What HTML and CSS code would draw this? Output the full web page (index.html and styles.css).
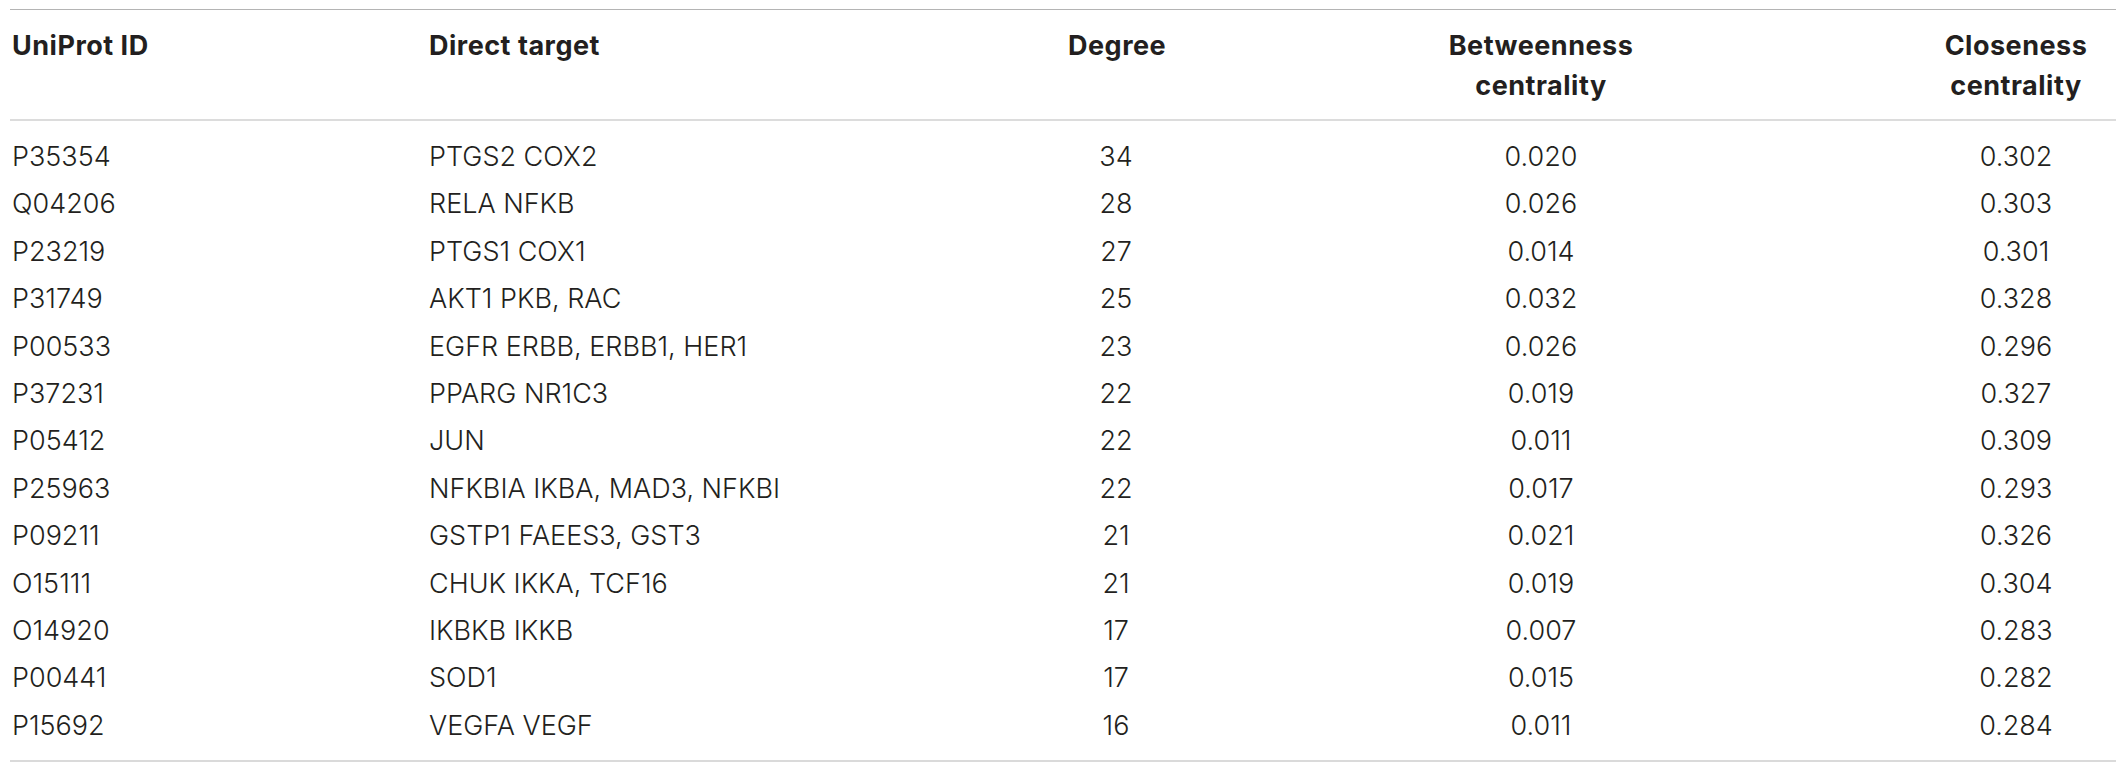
FILE: index.html
```html
<!DOCTYPE html>
<html>
<head>
<meta charset="utf-8">
<link rel="stylesheet" href="styles.css">
</head>
<body>
<table class="data">
  <colgroup>
    <col class="c-id">
    <col class="c-target">
    <col class="c-degree">
    <col class="c-between">
    <col class="c-close">
  </colgroup>
  <thead>
    <tr>
      <th class="left">UniProt ID</th>
      <th class="left">Direct target</th>
      <th>Degree</th>
      <th>Betweenness<br>centrality</th>
      <th>Closeness<br>centrality</th>
    </tr>
  </thead>
  <tbody>
    <tr><td class="left">P35354</td><td class="left">PTGS2 COX2</td><td>34</td><td>0.020</td><td>0.302</td></tr>
    <tr><td class="left">Q04206</td><td class="left">RELA NFKB</td><td>28</td><td>0.026</td><td>0.303</td></tr>
    <tr><td class="left">P23219</td><td class="left">PTGS1 COX1</td><td>27</td><td>0.014</td><td>0.301</td></tr>
    <tr><td class="left">P31749</td><td class="left">AKT1 PKB, RAC</td><td>25</td><td>0.032</td><td>0.328</td></tr>
    <tr><td class="left">P00533</td><td class="left">EGFR ERBB, ERBB1, HER1</td><td>23</td><td>0.026</td><td>0.296</td></tr>
    <tr><td class="left">P37231</td><td class="left">PPARG NR1C3</td><td>22</td><td>0.019</td><td>0.327</td></tr>
    <tr><td class="left">P05412</td><td class="left">JUN</td><td>22</td><td>0.011</td><td>0.309</td></tr>
    <tr><td class="left">P25963</td><td class="left">NFKBIA IKBA, MAD3, NFKBI</td><td>22</td><td>0.017</td><td>0.293</td></tr>
    <tr><td class="left">P09211</td><td class="left">GSTP1 FAEES3, GST3</td><td>21</td><td>0.021</td><td>0.326</td></tr>
    <tr><td class="left">O15111</td><td class="left">CHUK IKKA, TCF16</td><td>21</td><td>0.019</td><td>0.304</td></tr>
    <tr><td class="left">O14920</td><td class="left">IKBKB IKKB</td><td>17</td><td>0.007</td><td>0.283</td></tr>
    <tr><td class="left">P00441</td><td class="left">SOD1</td><td>17</td><td>0.015</td><td>0.282</td></tr>
    <tr><td class="left">P15692</td><td class="left">VEGFA VEGF</td><td>16</td><td>0.011</td><td>0.284</td></tr>
  </tbody>
</table>
</body>
</html>
```

FILE: styles.css
```css
html, body {
  margin: 0;
  padding: 0;
  background: #ffffff;
}

body {
  padding: 9px 0 0 10px;
}

.data {
  width: 2106px;
  table-layout: fixed;
  border-collapse: collapse;
  border-spacing: 0;
  color: #231f20;
  border-top: 1.5px solid #b4b4b4;
  border-bottom: 2px solid #dadada;
}

.c-id { width: 417px; }
.c-target { width: 639px; }
.c-degree { width: 100px; }
.c-between { width: 750px; }
.c-close { width: 200px; }

.data th,
.data td {
  padding: 0 2px;
  text-align: center;
  white-space: nowrap;
}

.data .left {
  text-align: left;
}

.data thead th {
  font-family: Inter, "Liberation Sans", Arial, sans-serif;
  font-weight: 700;
  font-size: 27px;
  letter-spacing: 0.5px;
  line-height: 39.5px;
  vertical-align: top;
  padding-top: 16px;
  padding-bottom: 14px;
  border-bottom: 2px solid #dcdcdc;
}

.data tbody td {
  font-family: Inter, Roboto, "Liberation Sans", sans-serif;
  font-weight: 300;
  font-size: 27px;
  line-height: 47.4px;
  vertical-align: top;
}

.data tbody tr:first-child td {
  padding-top: 12px;
}

.data tbody tr:last-child td {
  padding-bottom: 11px;
}
```
